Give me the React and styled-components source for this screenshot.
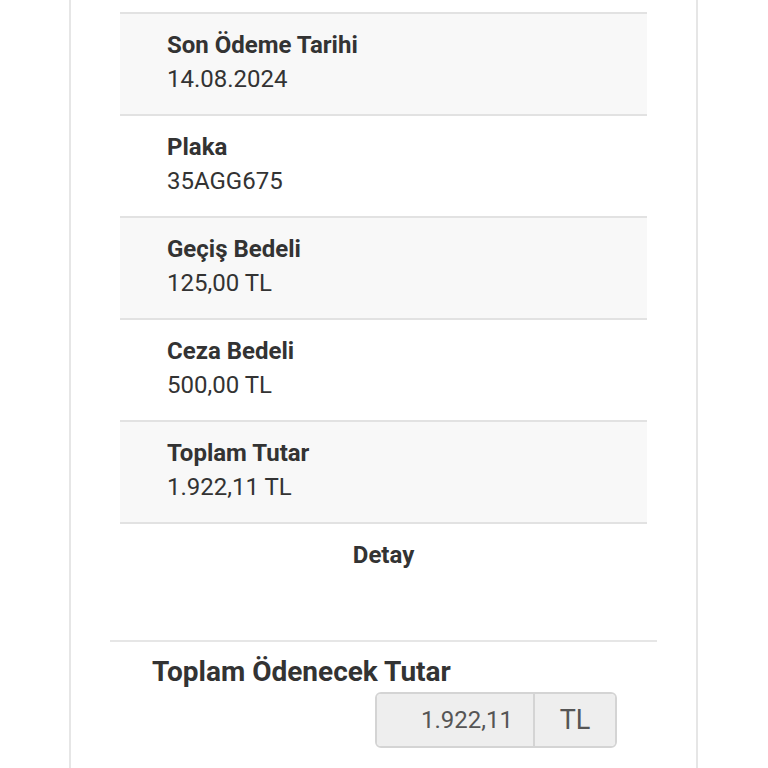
import styled, { createGlobalStyle } from "styled-components";

const rows = [
  { label: "Son Ödeme Tarihi", value: "14.08.2024" },
  { label: "Plaka", value: "35AGG675" },
  { label: "Geçiş Bedeli", value: "125,00 TL" },
  { label: "Ceza Bedeli", value: "500,00 TL" },
  { label: "Toplam Tutar", value: "1.922,11 TL" },
];

function App() {
  return (
    <>
      <GlobalStyle />
      <Page>
        <Card>
          <Table>
            {rows.map((row, i) => (
              <Row key={row.label} $striped={i % 2 === 0}>
                <Label>{row.label}</Label>
                <Value>{row.value}</Value>
              </Row>
            ))}
          </Table>
          <DetailLink>Detay</DetailLink>
          <Divider />
          <Summary>
            <SummaryTitle>Toplam Ödenecek Tutar</SummaryTitle>
            <InputGroup>
              <AmountInput readOnly value="1.922,11" />
              <Addon>TL</Addon>
            </InputGroup>
          </Summary>
        </Card>
      </Page>
    </>
  );
}

export default App;

const GlobalStyle = createGlobalStyle`
  html, body {
    margin: 0;
    padding: 0;
    background: #fff;
    font-family: Roboto, "Liberation Sans", sans-serif;
    color: #333;
  }
`;

const Page = styled.div`
  width: 768px;
  height: 768px;
  overflow: hidden;
  display: flex;
  justify-content: center;
`;

const Card = styled.div`
  width: 629px;
  margin-left: -1px;
  border-left: 2px solid #e6e6e6;
  border-right: 2px solid #e6e6e6;
  padding: 12px 49px 0;
  box-sizing: border-box;
  display: flex;
  flex-direction: column;
`;

const Table = styled.div`
  display: flex;
  flex-direction: column;
  border-top: 2px solid #e2e2e2;
`;

const Row = styled.div`
  height: 100px;
  padding-left: 47px;
  border-bottom: 2px solid #e2e2e2;
  background: ${(p) => (p.$striped ? "#f8f8f8" : "#fff")};
  display: flex;
  flex-direction: column;
`;

const Label = styled.div`
  font-size: 24px;
  font-weight: 700;
  color: #333;
  line-height: 34px;
  margin-top: 14px;
`;

const Value = styled.div`
  font-size: 24px;
  color: #333;
  line-height: 34px;
`;

const DetailLink = styled.div`
  text-align: center;
  font-size: 24px;
  font-weight: 700;
  color: #333;
  margin-top: 17px;
`;

const Divider = styled.div`
  height: 2px;
  background: #e6e6e6;
  margin: 71px -10px 0;
`;

const Summary = styled.div`
  display: flex;
  flex-direction: column;
  padding-left: 32px;
  padding-right: 30px;
`;

const SummaryTitle = styled.div`
  font-size: 28px;
  font-weight: 700;
  color: #333;
  margin-top: 13px;
  line-height: 34px;
`;

const InputGroup = styled.div`
  display: flex;
  align-self: flex-end;
  margin-top: 3px;
  height: 56px;
  border: 2px solid #d4d4d4;
  border-radius: 6px;
  overflow: hidden;
  box-sizing: border-box;
`;

const AmountInput = styled.input`
  width: 158px;
  border: none;
  border-right: 2px solid #d4d4d4;
  background: #eee;
  font-family: Roboto, "Liberation Sans", sans-serif;
  font-size: 24px;
  color: #555;
  text-align: right;
  padding: 0 20px 0 0;
  box-sizing: border-box;
  outline: none;
`;

const Addon = styled.div`
  width: 80px;
  background: #eee;
  display: flex;
  align-items: center;
  justify-content: center;
  font-size: 27px;
  color: #555;
`;
